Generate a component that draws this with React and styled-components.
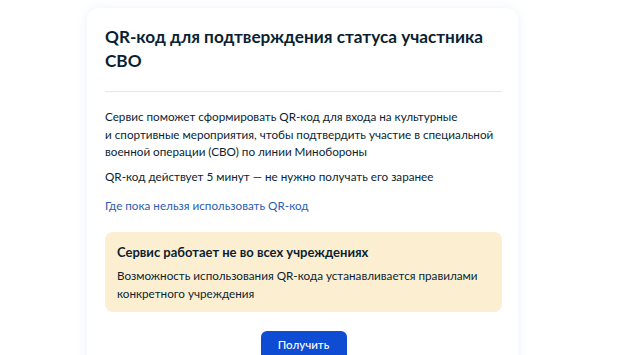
import React from "react";
import styled, { createGlobalStyle } from "styled-components";

const GlobalStyle = createGlobalStyle`
  html, body {
    margin: 0;
    padding: 0;
    background: #ffffff;
  }
  body {
    font-family: Lato, "Noto Sans", sans-serif;
    color: #0b1f33;
  }
`;

const Page = styled.div`
  height: 355px;
  overflow: hidden;
  padding: 8px 0 0 87px;
  box-sizing: border-box;
`;

const Card = styled.section`
  width: 431px;
  box-sizing: border-box;
  padding: 17px 16px 0 18px;
  background: #fff;
  border-radius: 12px;
  box-shadow: 0 1px 12px rgba(110, 140, 190, 0.14);
  min-height: 400px;
`;

const Title = styled.h1`
  margin: 0;
  font-size: 17.2px;
  line-height: 24px;
  font-weight: 700;
  color: #0b1f33;
`;

const Divider = styled.hr`
  margin: 18px 0 0;
  border: none;
  height: 1px;
  background: #e3e8ee;
`;

const Body = styled.div`
  padding-top: 16px;
  font-size: 11.7px;
  line-height: 17.5px;
`;

const Text = styled.p`
  margin: 0 0 ${(p) => p.$gap || 7.5}px;
  color: #0b1f33;
`;

const Link = styled.a`
  display: block;
  color: #2d5cb2;
  text-decoration: none;
  font-size: 11.7px;
  line-height: 18px;
`;

const Alert = styled.div`
  margin-top: 18px;
  background: #fcefd1;
  border-radius: 8px;
  padding: 11px 12px 10px;
`;

const AlertTitle = styled.div`
  font-weight: 700;
  font-size: 13px;
  line-height: 18px;
  margin-bottom: 5px;
`;

const AlertText = styled.div`
  font-size: 11.7px;
  line-height: 18px;
`;

const Actions = styled.div`
  display: flex;
  justify-content: center;
  padding-top: 19px;
`;

const Button = styled.button`
  width: 86px;
  height: 36px;
  border: none;
  border-radius: 6px;
  background: #0d4cd3;
  color: #fff;
  font-family: Lato, "Noto Sans", sans-serif;
  font-size: 11.5px;
  font-weight: 500;
  padding: 0 0 8px;
`;

export default function App() {
  return (
    <>
      <GlobalStyle />
      <Page>
        <Card>
          <Title>
            QR-код для подтверждения статуса участника
            <br />
            СВО
          </Title>
          <Divider />
          <Body>
            <Text>
              Сервис поможет сформировать QR-код для входа на культурные
              <br />
              и спортивные мероприятия, чтобы подтвердить участие в специальной
              <br />
              военной операции (СВО) по линии Минобороны
            </Text>
            <Text $gap={10}>QR-код действует 5 минут — не нужно получать его заранее</Text>
            <Link href="#">Где пока нельзя использовать QR-код</Link>
            <Alert>
              <AlertTitle>Сервис работает не во всех учреждениях</AlertTitle>
              <AlertText>
                Возможность использования QR-кода устанавливается правилами
                <br />
                конкретного учреждения
              </AlertText>
            </Alert>
            <Actions>
              <Button>Получить</Button>
            </Actions>
          </Body>
        </Card>
      </Page>
    </>
  );
}
